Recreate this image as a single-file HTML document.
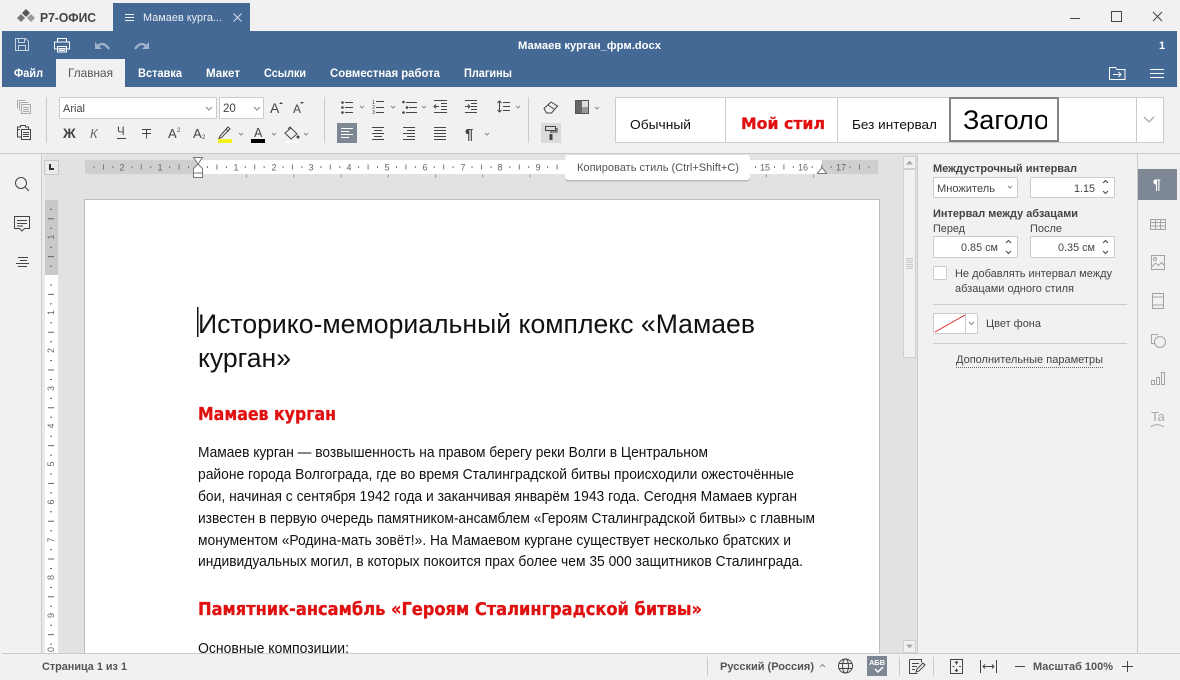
<!DOCTYPE html>
<html lang="ru"><head><meta charset="utf-8"><title>Р7-Офис</title>
<style>
html,body{margin:0;padding:0;width:1180px;height:680px;overflow:hidden;background:#f1f1f1}
svg{display:block;font-family:"Liberation Sans","Noto Sans CJK SC",sans-serif}
.i{fill:none;stroke:#444;stroke-width:1}
.l{fill:none;stroke:#fff;stroke-width:1}
.t{font-size:11px;fill:#444}
.b{font-size:11px;fill:#444;font-weight:bold}
.w{font-size:12px;fill:#fff;font-weight:bold}
.d{font-size:15px;fill:#111}
.h{font-family:"DejaVu Sans",sans-serif;font-weight:bold;fill:#e01010;stroke:#e01010;stroke-width:.3}
.r{font-size:9px;fill:#666;text-anchor:middle}
.c{fill:none;stroke:#888;stroke-width:1}
.box{fill:#fff;stroke:#cbcbcb;stroke-width:1}
</style></head><body>
<svg width="1180" height="680" viewBox="0 0 1180 680" xmlns="http://www.w3.org/2000/svg">
<defs><clipPath id="cz"><rect x="951" y="99" width="96" height="41"/></clipPath></defs>
<rect width="1180" height="680" fill="#f1f1f1"/>

<!-- title bar -->
<path d="M17 18l4-4 4 4-4 4z" fill="#777"/><path d="M22 13l4-4 4 4-4 4z" fill="#555"/><path d="M27 18l4-4 4 4-4 4z" fill="#999"/>
<text x="40" y="22" font-size="12.5" font-weight="bold" fill="#444" textLength="56" lengthAdjust="spacingAndGlyphs">Р7-ОФИС</text>
<rect x="113" y="3" width="137" height="28" fill="#446995"/>
<path class="l" d="M125 14.500h9M125 17.500h9M125 20.500h9" stroke-opacity=".9"/>
<text x="143" y="21" font-size="11" fill="#fff" fill-opacity=".9" textLength="79" lengthAdjust="spacingAndGlyphs">Мамаев курга...</text>
<path class="l" d="M233.500 13.500l8 8M241.500 13.500l-8 8" stroke-opacity=".8"/>
<path d="M1070 18.500h10" stroke="#444" fill="none"/>
<rect x="1111.500" y="11.500" width="10" height="10" class="i"/>
<path class="i" d="M1153 12l9 9M1162 12l-9 9"/>

<!-- blue header -->
<rect x="2" y="31" width="1175" height="56" fill="#446995"/>
<g class="l" stroke-opacity=".7"><path d="M15.500 38.500h10l3 3v9h-13zM18.500 38.500v4h6v-4M18.500 50.500v-5h7v5"/></g>
<g class="l"><path d="M57.500 42v-3.500h9V42M54.500 49v-7h15v7zM57.500 46.500h9v5.500h-9zM59 48.500h6M59 50.500h6"/></g>
<path d="M95 42v7h7z" fill="#9fb3cb"/><path d="M98 46c3-3 7-3 11 3" fill="none" stroke="#9fb3cb" stroke-width="2.200"/>
<path d="M149 42v7h-7z" fill="#9fb3cb"/><path d="M146 46c-3-3-7-3-11 3" fill="none" stroke="#9fb3cb" stroke-width="2.200"/>
<text x="518" y="49" class="b" style="fill:#fff" textLength="143" lengthAdjust="spacingAndGlyphs">Мамаев курган_фрм.docx</text>
<text x="1159" y="49" class="b" style="fill:#fff">1</text>
<rect x="56" y="59" width="69" height="28" fill="#f1f1f1"/>
<text x="14" y="77" class="w" textLength="29" lengthAdjust="spacingAndGlyphs">Файл</text>
<text x="68" y="77" font-size="12" fill="#555" textLength="45" lengthAdjust="spacingAndGlyphs">Главная</text>
<text x="138" y="77" class="w" textLength="44" lengthAdjust="spacingAndGlyphs">Вставка</text>
<text x="206" y="77" class="w" textLength="34" lengthAdjust="spacingAndGlyphs">Макет</text>
<text x="264" y="77" class="w" textLength="42" lengthAdjust="spacingAndGlyphs">Ссылки</text>
<text x="330" y="77" class="w" textLength="110" lengthAdjust="spacingAndGlyphs">Совместная работа</text>
<text x="464" y="77" class="w" textLength="48" lengthAdjust="spacingAndGlyphs">Плагины</text>
<path class="l" d="M1109.500 79.500v-12h6l1.500 2h8v10zM1113 74.500h8M1118.500 72l2.500 2.500-2.500 2.500"/>
<path class="l" d="M1150 69.500h14M1150 73.500h14M1150 77.500h14"/>

<!-- toolbar -->
<rect x="0" y="153" width="1180" height="1" fill="#cbcbcb"/>
<g class="i" stroke-opacity=".4"><path d="M17.500 100.500h8M17.500 100.500v8M19.500 102.500h9M19.500 102.500v8"/><rect x="21.500" y="104.500" width="9" height="9"/><path d="M23 107.500h6M23 109.500h6M23 111.500h6"/></g>
<g class="i"><path d="M20 129.500h-2.500v-2.500h3v-1.500h5v1.500h3v2.500M17.500 129v8h3.500"/><rect x="21.500" y="129.500" width="9" height="10"/><path d="M23 132.500h6M23 134.500h6M23 136.500h6"/></g>
<rect x="46" y="97" width="1" height="46" fill="#cbcbcb"/>
<rect x="59.500" y="97.500" width="157" height="21" rx="1" class="box"/>
<text x="63" y="112" font-size="11" fill="#444">Arial</text>
<path class="c" d="M206 107l3 3 3-3"/>
<rect x="219.500" y="97.500" width="44" height="21" rx="1" class="box"/>
<text x="223" y="112" font-size="11.500" fill="#444">20</text>
<path class="c" d="M254 107l3 3 3-3"/>
<text x="270" y="113" font-size="14" fill="#444">A</text><path d="M279 104l2-2 2 2z" fill="#444"/>
<text x="293" y="113" font-size="12" fill="#444">A</text><path d="M300 102l2 2 2-2z" fill="#444"/>
<text x="63" y="138" font-size="14" font-weight="bold" fill="#444">Ж</text>
<text x="90" y="138" font-size="13" font-style="italic" fill="#666">К</text>
<text x="117" y="135" font-size="11.500" fill="#444">Ч</text><path class="i" d="M117 138.500h9"/>
<path class="i" d="M142 129.500h9M146.500 129.500v9M142 133.500h9"/>
<text x="168" y="138" font-size="13" fill="#444">A</text><text x="177" y="132" font-size="6" fill="#444">2</text>
<text x="193" y="138" font-size="13" fill="#444">A</text><text x="202" y="139" font-size="6" fill="#444">2</text>
<path class="i" d="M220 136l-1 2.500 2.500-1 8.500-8.500-2-2zM226.500 129.500l2 2"/><rect x="218" y="139" width="14" height="4" fill="#f2f21e"/>
<path class="c" d="M239 133l2 2 2-2"/>
<text x="254" y="137" font-size="12.500" fill="#444">A</text><rect x="251" y="139" width="14" height="4" fill="#000"/>
<path class="c" d="M272 133l2 2 2-2"/>
<path class="i" d="M285 133l6-5 6 6-6 5zM288 129l2-2 2 2"/><circle cx="298" cy="137" r="1.500" fill="#444"/><rect x="285" y="141" width="13" height="2" fill="#fff"/>
<path class="c" d="M304 133l2 2 2-2"/>
<rect x="324" y="97" width="1" height="46" fill="#cbcbcb"/>

<!-- list icons -->
<g class="i">
<path d="M345 102.500h8M345 107.500h8M345 112.500h8"/>
<path d="M376 101.500h8M376 107.500h8M376 112.500h8"/>
<path d="M406 102.500h11M409 107.500h8M406 112.500h11"/>
<path d="M434 100.500h13M441 103.500h6M441 106.500h6M441 109.500h6M434 112.500h13M439 106.500h-5M436 104.500l-2 2 2 2"/>
<path d="M465 100.500h12M471 103.500h6M471 106.500h6M471 109.500h6M465 112.500h12M465 106.500h5M468 104.500l2 2-2 2"/>
<path d="M499.500 101v11M497.500 103l2-2 2 2M497.500 110l2 2 2-2M503 102.500h7M503 106.500h7M503 110.500h7"/>
</g>
<g fill="#444"><circle cx="342.500" cy="102.500" r="1.300"/><circle cx="342.500" cy="107.500" r="1.300"/><circle cx="342.500" cy="112.500" r="1.300"/><circle cx="403.500" cy="102" r="1.300"/><circle cx="407" cy="107.500" r="1.300"/><circle cx="403.500" cy="112.500" r="1.300"/></g>
<text x="372" y="104" font-size="5.500" fill="#444">1</text><text x="372" y="109" font-size="5.500" fill="#444">2</text><text x="372" y="114" font-size="5.500" fill="#444">3</text>
<g class="c"><path d="M360 106l2 2 2-2M391 106l2 2 2-2M422 106l2 2 2-2M516 106l2 2 2-2M485 133l2 2 2-2"/></g>
<rect x="337" y="123" width="20" height="20" fill="#7d8894"/>
<path d="M341 128.500h12M341 131.500h8M341 134.500h12M341 137.500h8" stroke="#fff" fill="none"/>
<g class="i">
<path d="M372 127.500h12M374 130.500h8M372 133.500h12M374 136.500h8M372 139.500h12"/>
<path d="M403 127.500h12M407 130.500h8M403 133.500h12M407 136.500h8M403 139.500h12"/>
<path d="M434 127.500h12M434 130.500h12M434 133.500h12M434 136.500h12M434 139.500h12"/>
</g>
<text x="465" y="139" font-size="15" font-weight="bold" fill="#444">¶</text>
<rect x="528" y="97" width="1" height="46" fill="#cbcbcb"/>
<path class="i" d="M544 108.500l7-6.500 6.500 4-6 7h-5zM548 105l6 4"/>
<rect x="575.500" y="100.500" width="13" height="13" fill="#fff" stroke="#555"/>
<rect x="576" y="101" width="6" height="12" fill="#666"/><rect x="582" y="107" width="6" height="6" fill="#999"/><rect x="582" y="101" width="6" height="6" fill="#ddd"/>
<path class="c" d="M595 107l2 2 2-2"/>
<rect x="541" y="123" width="20" height="20" fill="#d8dadc"/>
<path class="i" d="M545.500 126.500h10v4h-10zM551 130.500v2.500"/><rect x="549.500" y="134" width="3" height="6" fill="#444"/>
<path class="i" d="M555.500 128.500h1.500v3.500h-6"/>

<!-- styles gallery -->
<rect x="615.500" y="97.500" width="548" height="45" class="box"/>
<path d="M725.500 98v45M837.500 98v45M1136.500 98v45" stroke="#cbcbcb" fill="none"/>
<text x="630" y="129" font-size="13" fill="#111" textLength="61" lengthAdjust="spacingAndGlyphs">Обычный</text>
<text x="741" y="129" class="h" font-size="16" textLength="84" lengthAdjust="spacingAndGlyphs">Мой стил</text>
<text x="852" y="129" font-size="13" fill="#111" textLength="85" lengthAdjust="spacingAndGlyphs">Без интервал</text>
<rect x="950" y="98" width="108" height="43" fill="#fff" stroke="#848484" stroke-width="2"/>
<text x="963" y="129" font-size="27" fill="#000" clip-path="url(#cz)">Заголо</text>
<path d="M1144 117l5 5 5-5" fill="none" stroke="#aaa" stroke-width="1.300"/>

<!-- left panel -->
<rect x="41" y="154" width="1" height="499" fill="#cbcbcb"/>
<circle cx="21" cy="183" r="5.500" class="i"/><path class="i" d="M25 187l4 4"/>
<path class="i" d="M14.500 216.500h15v12h-5l-2.500 2.500-2.500-2.500h-5zM17 220.500h10M17 223.500h10M17 226h6"/>
<path class="i" d="M18 257.500h10M20 260.500h7M16 263.500h13M18 266.500h9"/>

<!-- canvas -->
<rect x="42" y="154" width="861" height="499" fill="#e2e2e2"/>
<rect x="42" y="154" width="3" height="499" fill="#eaeaea"/>
<rect x="44.500" y="160.500" width="14" height="14" fill="#ebebeb" stroke="#c8c8c8"/>
<path d="M49 164v6h5v-2h-3v-4z" fill="#333"/>

<!-- horizontal ruler -->
<rect x="85" y="160" width="793" height="14" fill="#fff"/>
<rect x="85" y="160" width="113" height="14" fill="#cfcfcf"/>
<rect x="822" y="160" width="56" height="14" fill="#cfcfcf"/>
<line x1="93.550" y1="167" x2="876" y2="167" stroke="#777" stroke-width="2" stroke-dasharray="1 17.900"/>
<line x1="103" y1="167" x2="876" y2="167" stroke="#777" stroke-width="5" stroke-dasharray="1 36.800"/>
<g>
<rect x="115" y="161" width="14" height="12" fill="#cfcfcf"/><text x="122" y="170.500" class="r">2</text>
<rect x="153" y="161" width="14" height="12" fill="#cfcfcf"/><text x="160" y="170.500" class="r">1</text>
</g>
<g>
<rect x="230" y="161" width="12" height="12" fill="#fff"/><text x="236" y="170.500" class="r">1</text>
<rect x="268" y="161" width="12" height="12" fill="#fff"/><text x="274" y="170.500" class="r">2</text>
<rect x="306" y="161" width="12" height="12" fill="#fff"/><text x="311" y="170.500" class="r">3</text>
<rect x="343" y="161" width="12" height="12" fill="#fff"/><text x="349" y="170.500" class="r">4</text>
<rect x="381" y="161" width="12" height="12" fill="#fff"/><text x="387" y="170.500" class="r">5</text>
<rect x="419" y="161" width="12" height="12" fill="#fff"/><text x="425" y="170.500" class="r">6</text>
<rect x="457" y="161" width="12" height="12" fill="#fff"/><text x="463" y="170.500" class="r">7</text>
<rect x="495" y="161" width="12" height="12" fill="#fff"/><text x="500" y="170.500" class="r">8</text>
<rect x="532" y="161" width="12" height="12" fill="#fff"/><text x="538" y="170.500" class="r">9</text>
<rect x="757" y="161" width="15" height="12" fill="#fff"/><text x="765" y="170.500" class="r">15</text>
<rect x="795" y="161" width="15" height="12" fill="#fff"/><text x="803" y="170.500" class="r">16</text>
<rect x="833" y="161" width="15" height="12" fill="#cfcfcf"/><text x="841" y="170.500" class="r">17</text>
</g>
<line x1="246" y1="176" x2="830" y2="176" stroke="#999" stroke-width="3" stroke-dasharray="1 46.250"/>
<path d="M193.500 157.500h9l-4.500 6.500z" fill="#fff" stroke="#777"/>
<path d="M198 164l-4.500 4.500v9h9v-9z" fill="#fff" stroke="#777"/>
<path d="M193.500 173h9" stroke="#777" fill="none"/>
<path d="M817.500 173.500l4.500-6 4.500 6z" fill="#fff" stroke="#777"/>

<!-- vertical ruler -->
<rect x="45" y="200" width="13" height="453" fill="#fff"/>
<rect x="45" y="200" width="13" height="75" fill="#c9c9c9"/>
<line x1="51" y1="208.900" x2="51" y2="653" stroke="#666" stroke-width="2" stroke-dasharray="1 17.900"/>
<line x1="51" y1="218.300" x2="51" y2="653" stroke="#666" stroke-width="6" stroke-dasharray="1 36.800"/>
<g>
<rect x="47" y="233" width="8" height="8" fill="#c9c9c9"/>
<text transform="translate(54 237) rotate(-90)" class="r">1</text>
<rect x="47" y="308" width="8" height="8" fill="#fff"/><text transform="translate(54 312.500) rotate(-90)" class="r">1</text>
<rect x="47" y="346" width="8" height="8" fill="#fff"/><text transform="translate(54 350.500) rotate(-90)" class="r">2</text>
<rect x="47" y="384" width="8" height="8" fill="#fff"/><text transform="translate(54 388.500) rotate(-90)" class="r">3</text>
<rect x="47" y="422" width="8" height="8" fill="#fff"/><text transform="translate(54 426) rotate(-90)" class="r">4</text>
<rect x="47" y="460" width="8" height="8" fill="#fff"/><text transform="translate(54 464) rotate(-90)" class="r">5</text>
<rect x="47" y="498" width="8" height="8" fill="#fff"/><text transform="translate(54 502) rotate(-90)" class="r">6</text>
<rect x="47" y="536" width="8" height="8" fill="#fff"/><text transform="translate(54 540) rotate(-90)" class="r">7</text>
<rect x="47" y="573" width="8" height="8" fill="#fff"/><text transform="translate(54 577.500) rotate(-90)" class="r">8</text>
<rect x="47" y="611" width="8" height="8" fill="#fff"/><text transform="translate(54 615.500) rotate(-90)" class="r">9</text>
<rect x="47" y="646" width="8" height="7" fill="#fff"/><text transform="translate(54 652) rotate(-90)" class="r">10</text>
</g>

<!-- page -->
<rect x="84.500" y="199.500" width="795" height="470" fill="#fff" stroke="#bdbdbd"/>
<rect x="197" y="307" width="1.500" height="30" fill="#111"/>
<text x="198" y="333" font-size="27" fill="#111" textLength="557" lengthAdjust="spacingAndGlyphs">Историко-мемориальный комплекс «Мамаев</text>
<text x="198" y="367" font-size="27" fill="#111" textLength="93" lengthAdjust="spacingAndGlyphs">курган»</text>
<text x="198" y="420" class="h" font-size="18" textLength="138" lengthAdjust="spacingAndGlyphs">Мамаев курган</text>
<text x="198" y="457" class="d" textLength="510" lengthAdjust="spacingAndGlyphs">Мамаев курган — возвышенность на правом берегу реки Волги в Центральном</text>
<text x="198" y="479" class="d" textLength="596" lengthAdjust="spacingAndGlyphs">районе города Волгограда, где во время Сталинградской битвы происходили ожесточённые</text>
<text x="198" y="501" class="d" textLength="599" lengthAdjust="spacingAndGlyphs">бои, начиная с сентября 1942 года и заканчивая январём 1943 года. Сегодня Мамаев курган</text>
<text x="198" y="523" class="d" textLength="617" lengthAdjust="spacingAndGlyphs">известен в первую очередь памятником-ансамблем «Героям Сталинградской битвы» с главным</text>
<text x="198" y="545" class="d" textLength="593" lengthAdjust="spacingAndGlyphs">монументом «Родина-мать зовёт!». На Мамаевом кургане существует несколько братских и</text>
<text x="198" y="566" class="d" textLength="605" lengthAdjust="spacingAndGlyphs">индивидуальных могил, в которых покоится прах более чем 35 000 защитников Сталинграда.</text>
<text x="198" y="615" class="h" font-size="18" textLength="504" lengthAdjust="spacingAndGlyphs">Памятник-ансамбль «Героям Сталинградской битвы»</text>
<text x="198" y="653" class="d" textLength="151" lengthAdjust="spacingAndGlyphs">Основные композиции:</text>

<!-- scrollbar -->
<rect x="903" y="154" width="14" height="499" fill="#e2e2e2"/>
<rect x="903.500" y="156.500" width="12" height="12" fill="#f1f1f1" stroke="#cfcfcf"/>
<path d="M906 164.500l3.500-4 3.500 4z" fill="#aaa"/>
<rect x="903.500" y="169.500" width="12" height="188" fill="#f1f1f1" stroke="#cfcfcf"/>
<path d="M906 258.500h7M906 260.500h7M906 262.500h7M906 264.500h7M906 266.500h7M906 268.500h7" stroke="#c8c8c8" fill="none"/>
<rect x="903.500" y="640.500" width="12" height="12" fill="#f1f1f1" stroke="#cfcfcf"/>
<path d="M906 644.500l3.500 4 3.500-4z" fill="#aaa"/>

<!-- right panel -->
<rect x="917" y="154" width="1" height="499" fill="#cbcbcb"/>
<rect x="1137" y="154" width="1" height="499" fill="#cbcbcb"/>
<text x="933" y="172" class="b" textLength="144" lengthAdjust="spacingAndGlyphs">Междустрочный интервал</text>
<rect x="933.500" y="177.500" width="84" height="20" rx="1" class="box"/>
<text x="937" y="192" class="t" textLength="58" lengthAdjust="spacingAndGlyphs">Множитель</text>
<path class="c" d="M1008 186l2 2 2-2"/>
<rect x="1030.500" y="177.500" width="84" height="20" rx="1" class="box"/>
<text x="1074" y="192" class="t" textLength="21" lengthAdjust="spacingAndGlyphs">1.15</text>
<path class="i" d="M1103 183l2.500-2.500 2.500 2.500M1103 191l2.500 2.500 2.500-2.500"/>
<text x="933" y="217" class="b" textLength="145" lengthAdjust="spacingAndGlyphs">Интервал между абзацами</text>
<text x="933" y="232" class="t" textLength="32" lengthAdjust="spacingAndGlyphs">Перед</text>
<text x="1030" y="232" class="t" textLength="32" lengthAdjust="spacingAndGlyphs">После</text>
<rect x="933.500" y="236.500" width="84" height="21" rx="1" class="box"/>
<text x="961" y="251" class="t" textLength="37" lengthAdjust="spacingAndGlyphs">0.85 см</text>
<path class="i" d="M1006 243l2.500-2.500 2.500 2.500M1006 251l2.500 2.500 2.500-2.500"/>
<rect x="1030.500" y="236.500" width="84" height="21" rx="1" class="box"/>
<text x="1058" y="251" class="t" textLength="37" lengthAdjust="spacingAndGlyphs">0.35 см</text>
<path class="i" d="M1103 243l2.500-2.500 2.500 2.500M1103 251l2.500 2.500 2.500-2.500"/>
<rect x="933.500" y="266.500" width="13" height="13" rx="1" class="box"/>
<text x="955" y="277" class="t" textLength="157" lengthAdjust="spacingAndGlyphs">Не добавлять интервал между</text>
<text x="955" y="292" class="t" textLength="119" lengthAdjust="spacingAndGlyphs">абзацами одного стиля</text>
<rect x="933" y="304" width="194" height="1" fill="#cbcbcb"/>
<rect x="933.500" y="313.500" width="44" height="20" rx="1" class="box"/>
<path d="M965.500 314v19" stroke="#cbcbcb" fill="none"/>
<path d="M935 332l30-17" stroke="#d22" fill="none"/>
<path class="c" d="M969 322l2.500 2.500 2.500-2.500"/>
<text x="986" y="327" class="t" textLength="55" lengthAdjust="spacingAndGlyphs">Цвет фона</text>
<rect x="933" y="343" width="194" height="1" fill="#cbcbcb"/>
<text x="956" y="363" class="t" textLength="147" lengthAdjust="spacingAndGlyphs">Дополнительные параметры</text>
<path d="M956 367.500h147" stroke="#666" stroke-dasharray="1 1" fill="none"/>

<!-- right tabs -->
<rect x="1138" y="169" width="39" height="31" fill="#7d8894"/>
<text x="1153" y="189" font-size="14" font-weight="bold" fill="#fff">¶</text>
<g class="i" stroke-opacity=".45">
<path d="M1150.500 219.500h15v10h-15zM1150.500 222.500h15M1150.500 226h15M1155.500 219.500v10M1160.500 219.500v10"/>
<path d="M1151.500 255.500h13v14h-13zM1151.500 267l4-4 3 2.500 3-3 3 3"/><circle cx="1155" cy="259" r="1.500" class="i"/>
<path d="M1152.500 293.500h11v15h-11zM1152.500 297h11M1152.500 305h11"/>
<path d="M1158 334.500h-6.500v9h3"/><circle cx="1160" cy="342" r="5.500"/>
<path d="M1151.500 384.500h3v-4h-3zM1156.500 384.500h3v-7h-3zM1161.500 384.500h3v-12h-3z"/>
<path d="M1151 427c3-3 9-3 13 0"/>
</g>
<text x="1151" y="421" font-size="13" fill="#aaa">Ta</text>

<!-- tooltip -->
<rect x="565" y="155" width="185" height="25" rx="3" fill="#000" opacity=".18" transform="translate(0 1.500)"/>
<rect x="565" y="155" width="185" height="25" rx="3" fill="#fff"/>
<text x="577" y="171" class="t" style="fill:#555" textLength="162" lengthAdjust="spacingAndGlyphs">Копировать стиль (Ctrl+Shift+C)</text>

<!-- status bar -->
<rect x="0" y="653" width="1180" height="27" fill="#f1f1f1"/>
<rect x="2" y="653" width="1178" height="1" fill="#cbcbcb"/>
<text x="42" y="670" class="b" style="fill:#555" textLength="85" lengthAdjust="spacingAndGlyphs">Страница 1 из 1</text>
<rect x="707" y="657" width="1" height="19" fill="#cbcbcb"/>
<text x="720" y="670" class="b" style="fill:#555" textLength="94" lengthAdjust="spacingAndGlyphs">Русский (Россия)</text>
<path class="c" d="M820 667l2.500-2.500 2.500 2.500"/>
<g class="i"><circle cx="845.500" cy="666" r="7"/><ellipse cx="845.500" cy="666" rx="3" ry="7"/><path d="M839 663.500h13M839 668.500h13"/></g>
<rect x="867" y="656" width="20" height="20" fill="#7d8894"/>
<text x="869" y="665" font-size="7.500" font-weight="bold" fill="#fff" textLength="16">АБВ</text>
<path d="M875 669l3 3 5-5" stroke="#fff" stroke-width="1.500" fill="none"/>
<rect x="899" y="657" width="1" height="19" fill="#cbcbcb"/>
<path class="i" d="M909.500 659.500h12v3M909.500 659.500v14h8M912 663.500h7M912 666.500h5M912 669.500h3M916 672l1-3 6-6 2 2-6 6z"/>
<rect x="933" y="657" width="1" height="19" fill="#cbcbcb"/>
<g class="i"><rect x="950.500" y="659.500" width="12" height="14"/><path d="M956.500 661.500v3M955 663l1.500-1.500 1.500 1.500M956.500 671.500v-3M955 670l1.500 1.500 1.500-1.500M952.500 666.500h2M959 666.500h2"/></g>
<path class="i" d="M980.500 660v13M996.500 660v13M983 666.500h11M985 664.500l-2 2 2 2M992 664.500l2 2-2 2"/>
<path class="i" d="M1015 666.500h10"/>
<text x="1033" y="670" class="b" style="fill:#555" textLength="80" lengthAdjust="spacingAndGlyphs">Масштаб 100%</text>
<path class="i" d="M1122 666.500h11M1127.500 661v11"/>
</svg>
</body></html>
